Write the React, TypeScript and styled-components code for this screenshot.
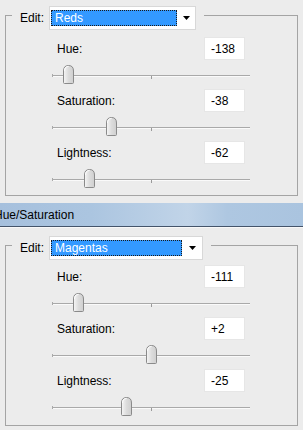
import React from "react";
import styled, { createGlobalStyle } from "styled-components";

const Global = createGlobalStyle`
  html, body { margin: 0; padding: 0; background: #ececec; }
  body {
    width: 303px; height: 430px; overflow: hidden;
    font-family: "Liberation Sans", Arial, sans-serif;
    font-size: 12px; color: #000;
  }
`;

const Page = styled.div`
  display: flex;
  flex-direction: column;
  width: 303px;
  height: 430px;
  background: #ececec;
`;

const Section = styled.section<{ $top: number; $bottom: number }>`
  padding: ${(p) => p.$top}px 5px ${(p) => p.$bottom}px 5px;
`;

const Group = styled.fieldset`
  margin: 0;
  padding: 0;
  min-inline-size: 0;
  border: 1px solid #a4a4a4;
`;

const Legend = styled.legend`
  margin-left: 6px;
  padding: 6px 8px 0 8px;
  display: flex;
  align-items: center;
  gap: 5px;
`;

const Select = styled.div<{ $w: number }>`
  width: ${(p) => p.$w}px;
  height: 24px;
  box-sizing: border-box;
  background: #fff;
  border: 1px solid #d8d8d8;
  display: flex;
  align-items: stretch;
  padding: 3px 0 3px 1px;
`;

const Selected = styled.div`
  flex: 1;
  background: #3399ff;
  outline: 1px dotted #1a1a1a;
  outline-offset: -1px;
  color: #fff;
  padding-left: 4px;
  display: flex;
  align-items: center;
`;

const Arrow = styled.div<{ $w: number }>`
  width: ${(p) => p.$w}px;
  display: flex;
  justify-content: center;
  align-items: center;
`;

const Controls = styled.div<{ $top: number; $bottom: number }>`
  padding: ${(p) => p.$top}px 0 ${(p) => p.$bottom}px 46px;
  display: flex;
  flex-direction: column;
`;

const Control = styled.div`
  width: 198px;
  height: 52px;
  display: flex;
  flex-direction: column;
`;

const Row = styled.div`
  height: 23px;
  display: flex;
  align-items: center;
  justify-content: space-between;
  padding: 0 5px;
`;

const Label = styled.span`
  padding-top: 1px;
`;

const Value = styled.div`
  width: 41px;
  height: 23px;
  box-sizing: border-box;
  background: #fff;
  border: 1px solid #e6e6e6;
  padding-left: 6px;
  display: flex;
  align-items: center;
`;

const SliderArea = styled.div`
  height: 29px;
  padding-top: 15px;
  box-sizing: border-box;
`;

const Track = styled.div`
  position: relative;
  height: 1px;
  background: #a9a9a9;
  box-shadow: 0 1px 0 #fafafa;
  &::before {
    content: "";
    position: absolute;
    left: 0;
    top: -1px;
    width: 1px;
    height: 3px;
    background: #a9a9a9;
  }
  &::after {
    content: "";
    position: absolute;
    left: 99px;
    top: 1px;
    width: 1px;
    height: 3px;
    background: #9a9a9a;
  }
`;

const Thumb = styled.div`
  position: absolute;
  top: -10px;
  width: 11px;
  height: 19px;
  z-index: 1;
  display: flex;
`;

const TitleBar = styled.div`
  height: 23px;
  border-bottom: 1px solid #44546a;
  box-shadow: 0 1px 0 #f8f8f8;
  background: linear-gradient(
    to right,
    #a6c0dd 0%,
    #abc5e0 30%,
    #c1d4e8 62%,
    #aec7e1 75%,
    #aac4df 100%
  );
  display: flex;
  align-items: center;
  overflow: hidden;
`;

const TitleText = styled.span`
  margin-left: -6px;
  font-size: 12px;
  white-space: nowrap;
  color: #000;
`;

type Slider = { label: string; value: string; pos: number };
type Panel = {
  channel: string;
  selectW: number;
  arrowW: number;
  sliders: Slider[];
};

const ThumbIcon = () => (
  <svg width="11" height="19" viewBox="0 0 11 19">
    <defs>
      <linearGradient id="thumbFill" x1="0" y1="0" x2="1" y2="0">
        <stop offset="0" stopColor="#f6f6f6" />
        <stop offset="0.5" stopColor="#dcdcdc" />
        <stop offset="1" stopColor="#cfcfcf" />
      </linearGradient>
    </defs>
    <path
      d="M0.5 17.5 V6 Q0.5 0.5 5.5 0.5 Q10.5 0.5 10.5 6 V17.5 Q10.5 18.5 9.5 18.5 H1.5 Q0.5 18.5 0.5 17.5 Z"
      fill="url(#thumbFill)"
      stroke="#8a8a8a"
    />
    <path d="M1.5 6 Q1.5 1.5 5.5 1.5" fill="none" stroke="#ffffff" />
  </svg>
);

const DownArrow = () => (
  <svg width="7" height="4" viewBox="0 0 7 4">
    <polygon points="0,0 7,0 3.5,4" fill="#000" />
  </svg>
);

const SliderControl = ({ s }: { s: Slider }) => (
  <Control>
    <Row>
      <Label>{s.label}</Label>
      <Value>{s.value}</Value>
    </Row>
    <SliderArea>
      <Track>
        <Thumb style={{ left: Math.round(s.pos * 198 - 5.5) }}>
          <ThumbIcon />
        </Thumb>
      </Track>
    </SliderArea>
  </Control>
);

const PanelView = ({
  panel,
  top,
  bottom,
  ctrlTop,
  ctrlBottom,
}: {
  panel: Panel;
  top: number;
  bottom: number;
  ctrlTop: number;
  ctrlBottom: number;
}) => (
  <Section $top={top} $bottom={bottom}>
    <Group>
      <Legend>
        <span>Edit:</span>
        <Select $w={panel.selectW}>
          <Selected>{panel.channel}</Selected>
          <Arrow $w={panel.arrowW}>
            <DownArrow />
          </Arrow>
        </Select>
      </Legend>
      <Controls $top={ctrlTop} $bottom={ctrlBottom}>
        {panel.sliders.map((s) => (
          <SliderControl key={s.label} s={s} />
        ))}
      </Controls>
    </Group>
  </Section>
);

const panels: Panel[] = [
  {
    channel: "Reds",
    selectW: 147,
    arrowW: 18,
    sliders: [
      { label: "Hue:", value: "-138", pos: 0.081 },
      { label: "Saturation:", value: "-38", pos: 0.303 },
      { label: "Lightness:", value: "-62", pos: 0.187 },
    ],
  },
  {
    channel: "Magentas",
    selectW: 154,
    arrowW: 20,
    sliders: [
      { label: "Hue:", value: "-111", pos: 0.136 },
      { label: "Saturation:", value: "+2", pos: 0.505 },
      { label: "Lightness:", value: "-25", pos: 0.374 },
    ],
  },
];

export default function App() {
  return (
    <Page>
      <Global />
      <PanelView panel={panels[0]} top={0} bottom={7} ctrlTop={7} ctrlBottom={2} />
      <TitleBar>
        <TitleText>Hue/Saturation</TitleText>
      </TitleBar>
      <PanelView panel={panels[1]} top={3} bottom={4} ctrlTop={5} ctrlBottom={4} />
    </Page>
  );
}
